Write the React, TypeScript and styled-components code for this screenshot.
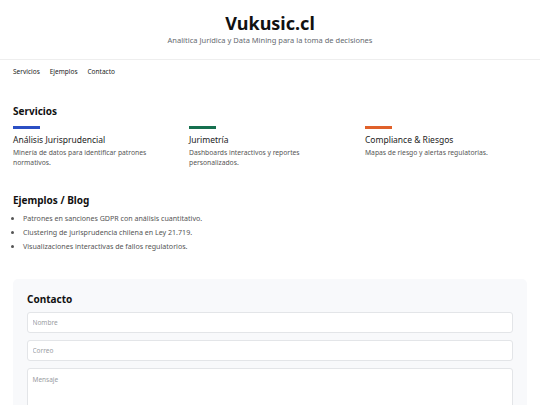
import * as React from 'react';
import styled, { createGlobalStyle } from 'styled-components';

const GlobalStyle = createGlobalStyle`
  html, body {
    margin: 0;
    padding: 0;
    background: #ffffff;
    font-family: "Noto Sans", "Open Sans", sans-serif;
    color: #222222;
  }
  * { box-sizing: border-box; }
`;

const Header = styled.header`
  text-align: center;
  padding: 11px 13px 14px;
  border-bottom: 1px solid #eeeeee;
`;

const SiteTitle = styled.h1`
  margin: 0;
  font-size: 18px;
  line-height: 24px;
  font-weight: 700;
  color: #111111;
`;

const Tagline = styled.p`
  margin: 0;
  font-size: 7.5px;
  line-height: 10px;
  color: #666a70;
`;

const Nav = styled.nav`
  display: flex;
  gap: 10px;
  padding: 7px 13px;
  font-size: 6.5px;
  line-height: 9px;
  color: #222222;
`;

const Main = styled.main`
  padding: 22px 13px 0;
`;

const Section = styled.section`
  margin-bottom: 26px;
`;

const SectionTitle = styled.h2<{ $gap?: number }>`
  margin: 0 0 ${p => p.$gap ?? 4}px;
  font-size: 10px;
  line-height: 13px;
  font-weight: 700;
  color: #111111;
`;

const CardGrid = styled.div`
  display: grid;
  grid-template-columns: repeat(3, 1fr);
  gap: 14px;
  margin-top: 8px;
`;

const Card = styled.div`
  padding-right: 16px;
`;

const Accent = styled.div<{ $color: string }>`
  width: 27px;
  height: 3px;
  background: ${p => p.$color};
  margin-bottom: 5px;
`;

const CardTitle = styled.h3`
  margin: 0;
  font-size: 8.5px;
  line-height: 12px;
  font-weight: 400;
  color: #222222;
`;

const CardText = styled.p`
  margin: 2px 0 0;
  font-size: 6.75px;
  line-height: 10px;
  color: #555555;
`;

const List = styled.ul`
  margin: 0;
  padding: 0 0 0 10px;
  font-size: 7.1px;
  line-height: 14px;
  color: #555555;
`;

const ContactBox = styled.section`
  background: #f8f9fb;
  border-radius: 5px;
  padding: 14px 14px 14px;
`;

const Field = styled.input`
  display: block;
  width: 100%;
  height: 21px;
  margin-bottom: 7px;
  padding: 0 4.5px;
  font-family: inherit;
  font-size: 6.5px;
  background: #ffffff;
  border: 1px solid #e3e5e8;
  border-radius: 3px;
  &::placeholder { color: #9a9da2; }
`;

const Message = styled.textarea`
  display: block;
  width: 100%;
  height: 60px;
  padding: 6px 4.5px;
  font-family: inherit;
  font-size: 6.5px;
  background: #ffffff;
  border: 1px solid #e3e5e8;
  border-radius: 3px;
  resize: none;
  &::placeholder { color: #9a9da2; }
`;

const services = [
  { title: 'Análisis Jurisprudencial', text: 'Minería de datos para identificar patrones normativos.', color: '#2b4fc4' },
  { title: 'Jurimetría', text: 'Dashboards interactivos y reportes personalizados.', color: '#16704f' },
  { title: 'Compliance & Riesgos', text: 'Mapas de riesgo y alertas regulatorias.', color: '#e0612a' },
];

const posts = [
  'Patrones en sanciones GDPR con análisis cuantitativo.',
  'Clustering de jurisprudencia chilena en Ley 21.719.',
  'Visualizaciones interactivas de fallos regulatorios.',
];

const App: React.FC = () => (
  <>
    <GlobalStyle />
    <Header>
      <SiteTitle>Vukusic.cl</SiteTitle>
      <Tagline>Analítica Jurídica y Data Mining para la toma de decisiones</Tagline>
    </Header>
    <Nav>
      <span>Servicios</span>
      <span>Ejemplos</span>
      <span>Contacto</span>
    </Nav>
    <Main>
      <Section>
        <SectionTitle>Servicios</SectionTitle>
        <CardGrid>
          {services.map(s => (
            <Card key={s.title}>
              <Accent $color={s.color} />
              <CardTitle>{s.title}</CardTitle>
              <CardText>{s.text}</CardText>
            </Card>
          ))}
        </CardGrid>
      </Section>
      <Section>
        <SectionTitle>Ejemplos / Blog</SectionTitle>
        <List>
          {posts.map(p => <li key={p}>{p}</li>)}
        </List>
      </Section>
      <ContactBox>
        <SectionTitle $gap={6}>Contacto</SectionTitle>
        <Field placeholder="Nombre" />
        <Field placeholder="Correo" />
        <Message placeholder="Mensaje" />
      </ContactBox>
    </Main>
  </>
);

export default App;
